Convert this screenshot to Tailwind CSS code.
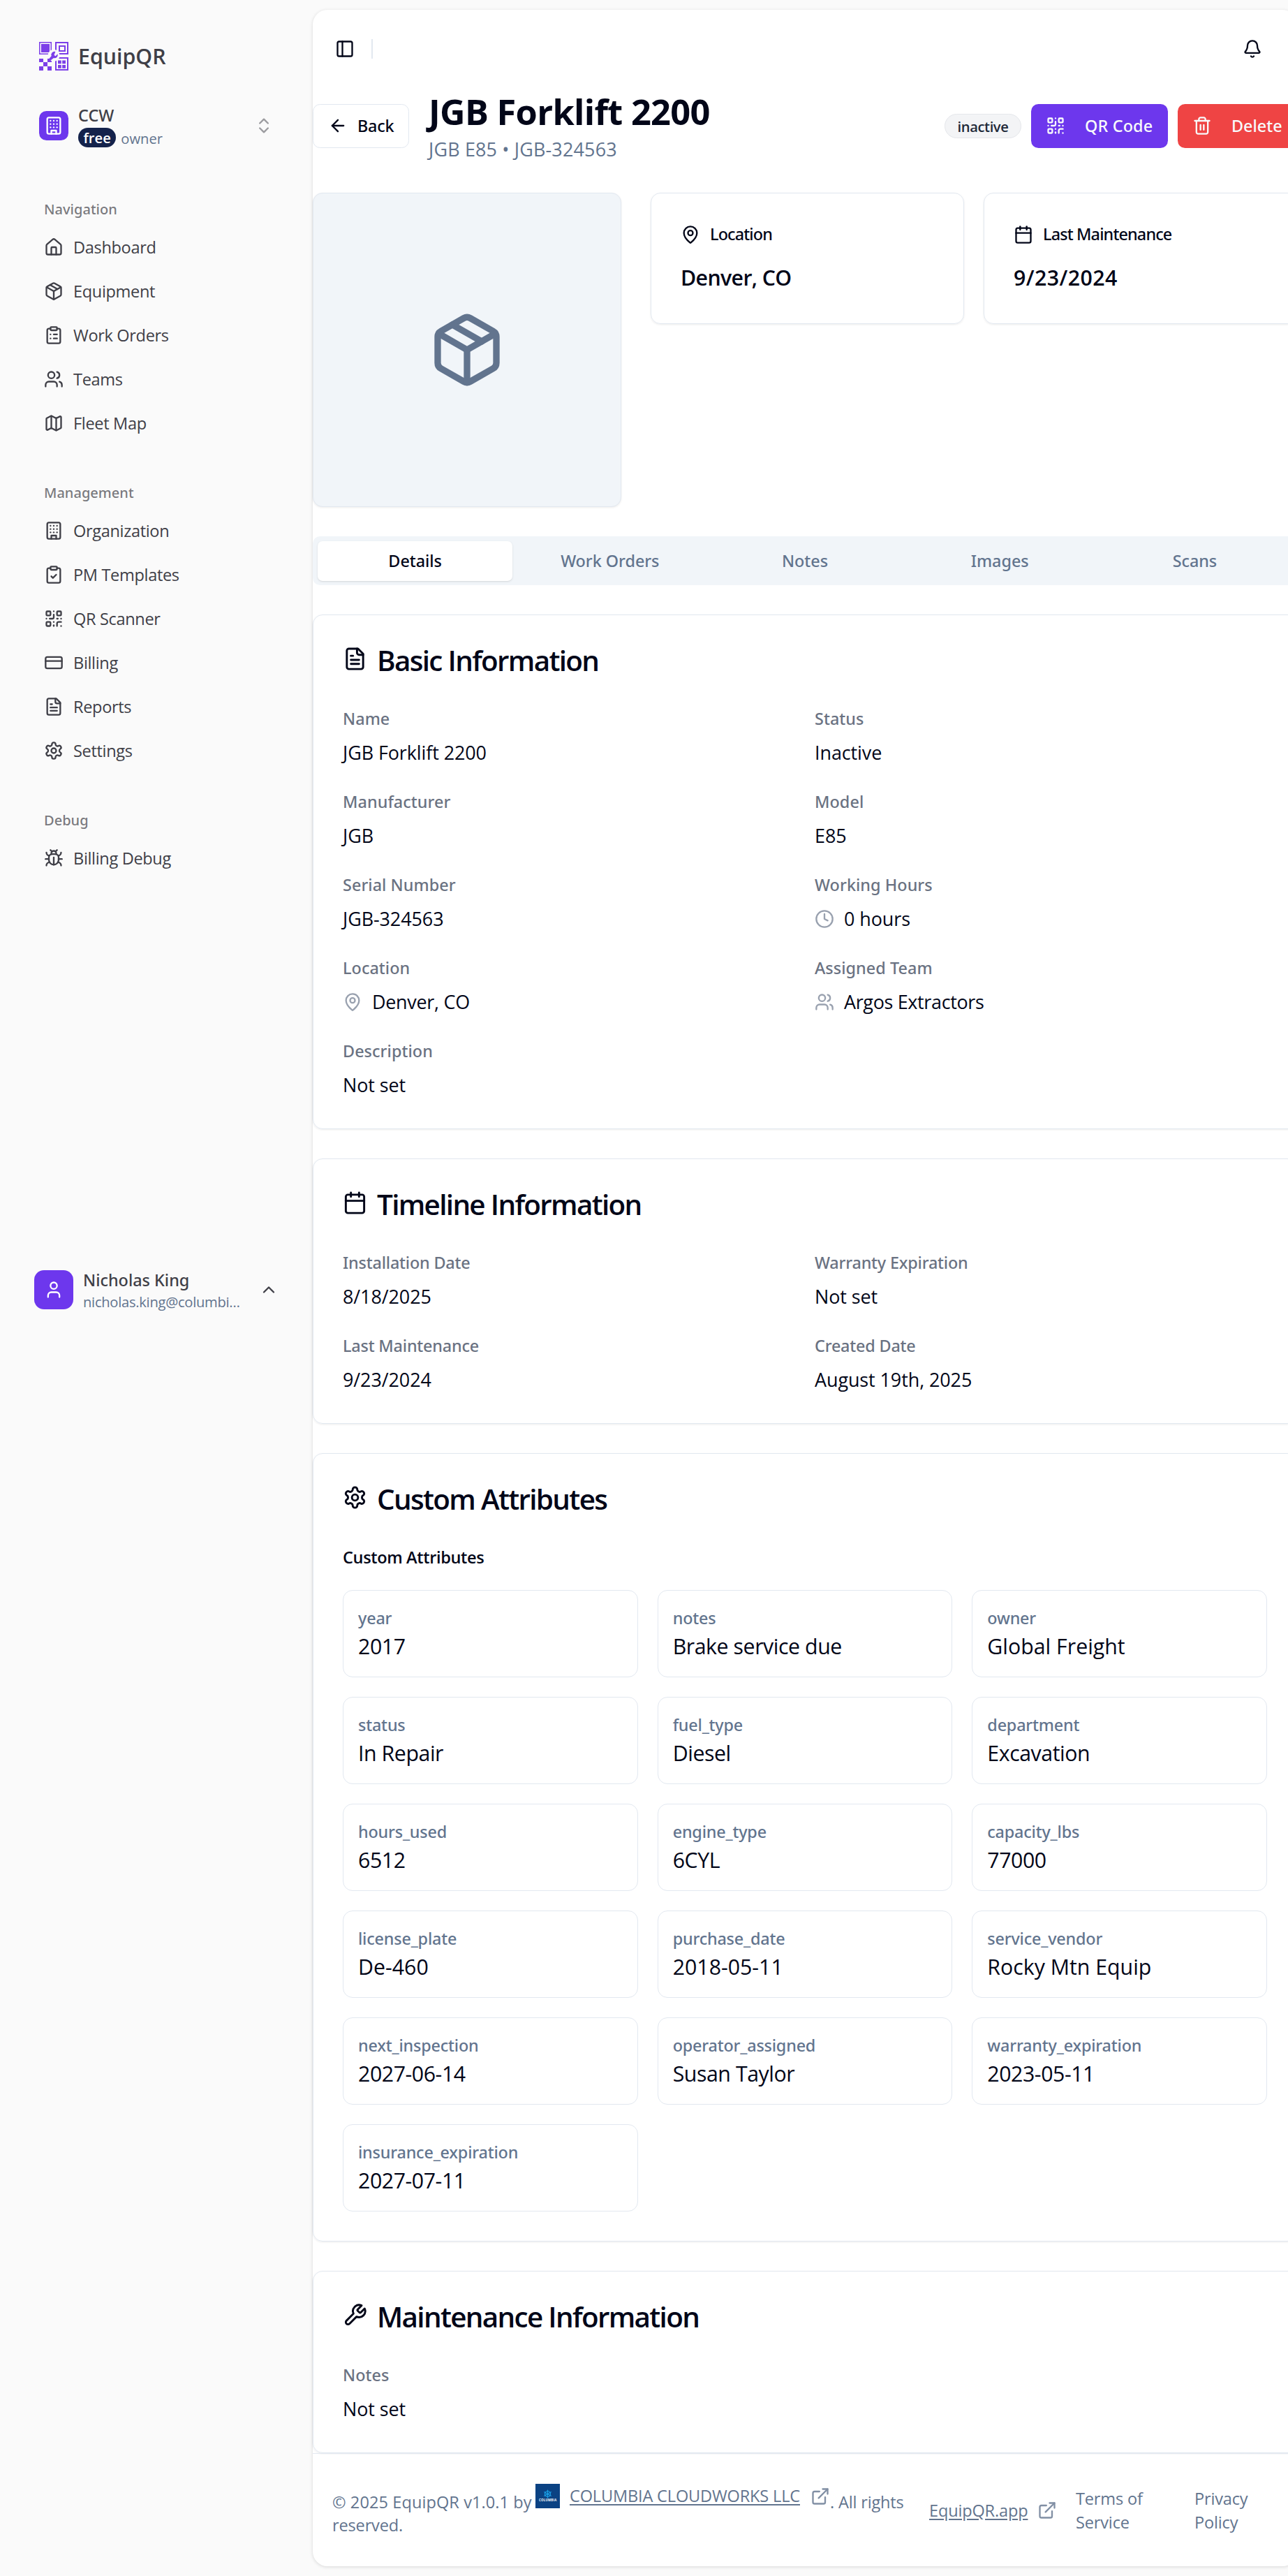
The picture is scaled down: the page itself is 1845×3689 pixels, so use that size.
<!DOCTYPE html>
<html lang="en" class="text-[28px]">
<head>
<meta charset="utf-8">
<title>EquipQR</title>
<script src="https://cdn.jsdelivr.net/npm/@tailwindcss/browser@4"></script>
</head>
<body class="flex h-[3689px] overflow-hidden bg-[#fafafa] fill-none stroke-2 font-['Segoe_UI','Open_Sans',sans-serif] leading-normal text-slate-950 [font-size-adjust:0.515]">

<!-- icon sprite -->
<svg class="absolute size-0" aria-hidden="true">
  <defs>
    <g id="i-panel"><rect width="18" height="18" x="3" y="3" rx="2"/><path d="M9 3v18"/></g>
    <g id="i-bell"><path d="M10.268 21a2 2 0 0 0 3.464 0"/><path d="M3.262 15.326A1 1 0 0 0 4 17h16a1 1 0 0 0 .74-1.673C19.41 13.956 18 12.499 18 8A6 6 0 0 0 6 8c0 4.499-1.411 5.956-2.738 7.326"/></g>
    <g id="i-back"><path d="m12 19-7-7 7-7"/><path d="M19 12H5"/></g>
    <g id="i-qr"><rect width="5" height="5" x="3" y="3" rx="1"/><rect width="5" height="5" x="16" y="3" rx="1"/><rect width="5" height="5" x="3" y="16" rx="1"/><path d="M21 16h-3a2 2 0 0 0-2 2v3"/><path d="M21 21v.01"/><path d="M12 7v3a2 2 0 0 1-2 2H7"/><path d="M3 12h.01"/><path d="M12 3h.01"/><path d="M12 16v.01"/><path d="M16 12h1"/><path d="M21 12v.01"/><path d="M12 21v-1"/></g>
    <g id="i-trash"><path d="M3 6h18"/><path d="M19 6v14c0 1-1 2-2 2H7c-1 0-2-1-2-2V6"/><path d="M8 6V4c0-1 1-2 2-2h4c1 0 2 1 2 2v2"/><path d="M10 11v6"/><path d="M14 11v6"/></g>
    <g id="i-package"><path d="M11 21.73a2 2 0 0 0 2 0l7-4A2 2 0 0 0 21 16V8a2 2 0 0 0-1-1.73l-7-4a2 2 0 0 0-2 0l-7 4A2 2 0 0 0 3 8v8a2 2 0 0 0 1 1.73z"/><path d="M12 22V12"/><path d="M3.29 7 12 12l8.71-5"/><path d="m7.5 4.27 9 5.15"/></g>
    <g id="i-pin"><path d="M20 10c0 4.993-5.539 10.193-7.399 11.799a1 1 0 0 1-1.202 0C9.539 20.193 4 14.993 4 10a8 8 0 0 1 16 0"/><circle cx="12" cy="10" r="3"/></g>
    <g id="i-calendar"><path d="M8 2v4"/><path d="M16 2v4"/><rect width="18" height="18" x="3" y="4" rx="2"/><path d="M3 10h18"/></g>
    <g id="i-file"><path d="M15 2H6a2 2 0 0 0-2 2v16a2 2 0 0 0 2 2h12a2 2 0 0 0 2-2V7Z"/><path d="M14 2v4a2 2 0 0 0 2 2h4"/><path d="M10 9H8"/><path d="M16 13H8"/><path d="M16 17H8"/></g>
    <g id="i-clock"><circle cx="12" cy="12" r="10"/><path d="M12 6v6l4 2"/></g>
    <g id="i-users"><path d="M16 21v-2a4 4 0 0 0-4-4H6a4 4 0 0 0-4 4v2"/><circle cx="9" cy="7" r="4"/><path d="M22 21v-2a4 4 0 0 0-3-3.87"/><path d="M16 3.13a4 4 0 0 1 0 7.75"/></g>
    <g id="i-user"><path d="M19 21v-2a4 4 0 0 0-4-4H9a4 4 0 0 0-4 4v2"/><circle cx="12" cy="7" r="4"/></g>
    <g id="i-settings"><path d="M12.22 2h-.44a2 2 0 0 0-2 2v.18a2 2 0 0 1-1 1.73l-.43.25a2 2 0 0 1-2 0l-.15-.08a2 2 0 0 0-2.73.73l-.22.38a2 2 0 0 0 .73 2.73l.15.1a2 2 0 0 1 1 1.72v.51a2 2 0 0 1-1 1.74l-.15.09a2 2 0 0 0-.73 2.73l.22.38a2 2 0 0 0 2.73.73l.15-.08a2 2 0 0 1 2 0l.43.25a2 2 0 0 1 1 1.73V20a2 2 0 0 0 2 2h.44a2 2 0 0 0 2-2v-.18a2 2 0 0 1 1-1.73l.43-.25a2 2 0 0 1 2 0l.15.08a2 2 0 0 0 2.73-.73l.22-.39a2 2 0 0 0-.73-2.73l-.15-.08a2 2 0 0 1-1-1.74v-.5a2 2 0 0 1 1-1.74l.15-.09a2 2 0 0 0 .73-2.73l-.22-.38a2 2 0 0 0-2.73-.73l-.15.08a2 2 0 0 1-2 0l-.43-.25a2 2 0 0 1-1-1.73V4a2 2 0 0 0-2-2z"/><circle cx="12" cy="12" r="3"/></g>
    <g id="i-wrench"><path d="M14.7 6.3a1 1 0 0 0 0 1.4l1.6 1.6a1 1 0 0 0 1.4 0l3.77-3.77a6 6 0 0 1-7.94 7.94l-6.91 6.91a2.12 2.12 0 0 1-3-3l6.91-6.91a6 6 0 0 1 7.94-7.94l-3.76 3.76z"/></g>
    <g id="i-external"><path d="M15 3h6v6"/><path d="M10 14 21 3"/><path d="M18 13v6a2 2 0 0 1-2 2H5a2 2 0 0 1-2-2V8a2 2 0 0 1 2-2h6"/></g>
    <g id="i-home"><path d="M15 21v-8a1 1 0 0 0-1-1h-4a1 1 0 0 0-1 1v8"/><path d="M3 10a2 2 0 0 1 .709-1.528l7-5.999a2 2 0 0 1 2.582 0l7 5.999A2 2 0 0 1 21 10v9a2 2 0 0 1-2 2H5a2 2 0 0 1-2-2z"/></g>
    <g id="i-list"><rect width="8" height="4" x="8" y="2" rx="1"/><path d="M16 4h2a2 2 0 0 1 2 2v14a2 2 0 0 1-2 2H6a2 2 0 0 1-2-2V6a2 2 0 0 1 2-2h2"/><path d="M12 11h4"/><path d="M12 16h4"/><path d="M8 11h.01"/><path d="M8 16h.01"/></g>
    <g id="i-check"><rect width="8" height="4" x="8" y="2" rx="1"/><path d="M16 4h2a2 2 0 0 1 2 2v14a2 2 0 0 1-2 2H6a2 2 0 0 1-2-2V6a2 2 0 0 1 2-2h2"/><path d="m9 14 2 2 4-4"/></g>
    <g id="i-map"><path d="M14.106 5.553a2 2 0 0 0 1.788 0l3.659-1.83A1 1 0 0 1 21 4.619v12.764a1 1 0 0 1-.553.894l-4.553 2.277a2 2 0 0 1-1.788 0l-4.212-2.106a2 2 0 0 0-1.788 0l-3.659 1.83A1 1 0 0 1 3 19.381V6.618a1 1 0 0 1 .553-.894l4.553-2.277a2 2 0 0 1 1.788 0z"/><path d="M15 5.764v15"/><path d="M9 3.236v15"/></g>
    <g id="i-building"><rect width="16" height="20" x="4" y="2" rx="2"/><path d="M9 22v-4h6v4"/><path d="M8 6h.01"/><path d="M16 6h.01"/><path d="M12 6h.01"/><path d="M12 10h.01"/><path d="M12 14h.01"/><path d="M16 10h.01"/><path d="M16 14h.01"/><path d="M8 10h.01"/><path d="M8 14h.01"/></g>
    <g id="i-card"><rect width="20" height="14" x="2" y="5" rx="2"/><path d="M2 10h20"/></g>
    <g id="i-bug"><path d="m8 2 1.88 1.88"/><path d="M14.12 3.88 16 2"/><path d="M9 7.13v-1a3.003 3.003 0 1 1 6 0v1"/><path d="M12 20c-3.3 0-6-2.7-6-6v-3a4 4 0 0 1 4-4h4a4 4 0 0 1 4 4v3c0 3.3-2.7 6-6 6"/><path d="M12 20v-9"/><path d="M6.53 9C4.6 8.8 3 7.1 3 5"/><path d="M6 13H2"/><path d="M3 21c0-2.1 1.7-3.9 3.8-4"/><path d="M20.97 5c0 2.1-1.6 3.8-3.5 4"/><path d="M22 13h-4"/><path d="M17.2 17c2.1.1 3.8 1.9 3.8 4"/></g>
    <g id="i-updown"><path d="m7 15 5 5 5-5"/><path d="m7 9 5-5 5 5"/></g>
    <g id="i-up"><path d="m18 15-6-6-6 6"/></g>
  </defs>
</svg>

<aside class="flex w-64 shrink-0 flex-col text-zinc-700 [stroke-linecap:round] [stroke-linejoin:round]">
  <div class="flex h-[150px] items-start gap-[14px] pl-8 pt-[59px]">
    <svg viewBox="0 0 42 42" class="size-6 shrink-0 stroke-none fill-[#7c3fe8]">
      <path fill-rule="evenodd" d="M0 1h18v18H0zM1.500 2.500v15h15v-15zM3 4h12v12H3z"/>
      <path fill-rule="evenodd" d="M23 1h19v18H23zM25 3v14h15V3zM28 6h10v9H28zM30 8v5h6V8z"/>
      <path fill-rule="evenodd" d="M23 23h19v19H23zM25 25v15h15V25zM27 27.500h4.800v4.800H27zM33.200 27.500H38v4.800h-4.800zM27 34h4.800v4.800H27zM33.200 34H38v4.800h-4.800z"/>
      <path d="M0 25h6v5H0zM12 25h6v5h-6zM6 30h6v6H6zM0 36h6v6H0zM12 36h6v6h-6z"/>
      <circle cx="21" cy="20.500" r="8.500" class="fill-[#fafafa]"/>
      <g transform="translate(11.500 14.500) scale(.7)" class="fill-[#7c3fe8]"><path d="M14.700 6.300a1 1 0 0 0 0 1.400l1.600 1.600a1 1 0 0 0 1.400 0l3.770-3.770a6.500 6.500 0 0 1-8 8.200l-8.500 6.600a2.120 2.120 0 0 1-3-3l7-8a6.500 6.500 0 0 1 8-8.700z"/></g>
    </svg>
    <span class="text-lg font-[570] leading-[44px]">EquipQR</span>
  </div>

  <div class="flex h-[60px] items-center gap-[14px] px-8">
    <span class="flex size-6 shrink-0 items-center justify-center rounded-md bg-[#6d37ed] text-white">
      <svg viewBox="0 0 24 24" class="size-4 stroke-current"><use href="#i-building"/></svg>
    </span>
    <div class="flex-1">
      <div class="font-['Noto_Sans'] text-sm font-medium leading-[33px]">CCW</div>
      <div class="flex items-center gap-[7px]">
        <span class="flex h-4 items-center rounded-full bg-[#14224b] px-[7.5px] pt-[1px] text-xs font-semibold text-white">free</span>
        <span class="pt-[2px] text-xs text-slate-500">owner</span>
      </div>
    </div>
    <svg viewBox="0 0 24 24" class="size-4 stroke-current opacity-50"><use href="#i-updown"/></svg>
  </div>

  <nav class="flex flex-col gap-[42px] pl-[63px] pt-[60px] text-sm tracking-[-0.014em]">
    <section>
      <h3 class="flex h-8 items-center pt-[3px] font-['Noto_Sans'] text-xs font-medium tracking-[0em] text-zinc-700/70">Navigation</h3>
      <ul class="flex flex-col gap-[7px]">
        <li class="flex h-8 items-center gap-[14px]"><svg viewBox="0 0 24 24" class="size-4 stroke-current"><use href="#i-home"/></svg>Dashboard</li>
        <li class="flex h-8 items-center gap-[14px]"><svg viewBox="0 0 24 24" class="size-4 stroke-current"><use href="#i-package"/></svg>Equipment</li>
        <li class="flex h-8 items-center gap-[14px]"><svg viewBox="0 0 24 24" class="size-4 stroke-current"><use href="#i-list"/></svg>Work Orders</li>
        <li class="flex h-8 items-center gap-[14px]"><svg viewBox="0 0 24 24" class="size-4 stroke-current"><use href="#i-users"/></svg>Teams</li>
        <li class="flex h-8 items-center gap-[14px]"><svg viewBox="0 0 24 24" class="size-4 stroke-current"><use href="#i-map"/></svg>Fleet Map</li>
      </ul>
    </section>
    <section>
      <h3 class="flex h-8 items-center pt-[3px] font-['Noto_Sans'] text-xs font-medium tracking-[0em] text-zinc-700/70">Management</h3>
      <ul class="flex flex-col gap-[7px]">
        <li class="flex h-8 items-center gap-[14px]"><svg viewBox="0 0 24 24" class="size-4 stroke-current"><use href="#i-building"/></svg>Organization</li>
        <li class="flex h-8 items-center gap-[14px]"><svg viewBox="0 0 24 24" class="size-4 stroke-current"><use href="#i-check"/></svg>PM Templates</li>
        <li class="flex h-8 items-center gap-[14px]"><svg viewBox="0 0 24 24" class="size-4 stroke-current"><use href="#i-qr"/></svg>QR Scanner</li>
        <li class="flex h-8 items-center gap-[14px]"><svg viewBox="0 0 24 24" class="size-4 stroke-current"><use href="#i-card"/></svg>Billing</li>
        <li class="flex h-8 items-center gap-[14px]"><svg viewBox="0 0 24 24" class="size-4 stroke-current"><use href="#i-file"/></svg>Reports</li>
        <li class="flex h-8 items-center gap-[14px]"><svg viewBox="0 0 24 24" class="size-4 stroke-current"><use href="#i-settings"/></svg>Settings</li>
      </ul>
    </section>
    <section>
      <h3 class="flex h-8 items-center pt-[3px] font-['Noto_Sans'] text-xs font-medium tracking-[0em] text-zinc-700/70">Debug</h3>
      <ul>
        <li class="flex h-8 items-center gap-[14px]"><svg viewBox="0 0 24 24" class="size-4 stroke-current"><use href="#i-bug"/></svg>Billing Debug</li>
      </ul>
    </section>
  </nav>

  <div class="mt-[562px] flex h-8 items-center px-[49px]">
    <span class="flex size-8 shrink-0 items-center justify-center rounded-lg bg-[#6d37ed] text-white">
      <svg viewBox="0 0 24 24" class="size-4 stroke-current"><use href="#i-user"/></svg>
    </span>
    <div class="ml-[14px] w-[232px] pt-[3px]">
      <div class="truncate font-['Noto_Sans'] text-sm font-medium leading-[31px]">Nicholas King</div>
      <div class="w-[231px] truncate text-xs leading-[30px] tracking-[-0.014em] text-slate-500">nicholas.king@columbiacloudworks.com</div>
    </div>
    <svg viewBox="0 0 24 24" class="ml-auto size-4 shrink-0 stroke-current"><use href="#i-up"/></svg>
  </div>
</aside>

<main class="my-2 flex h-[3661px] w-[1410px] shrink-0 flex-col rounded-xl bg-white shadow-[0_1px_5px_rgba(0,0,0,0.14)] [stroke-linecap:round] [stroke-linejoin:round]">
  <header class="flex h-16 shrink-0 items-center pl-[32px] pr-[50px]">
    <svg viewBox="0 0 24 24" class="size-4 stroke-current"><use href="#i-panel"/></svg>
    <div class="ml-[24px] h-4 w-[2px] bg-slate-200"></div>
    <svg viewBox="0 0 24 24" class="ml-auto size-4 stroke-current"><use href="#i-bell"/></svg>
  </header>

  <div class="flex h-[108px] shrink-0 items-center">
    <button class="flex h-9 w-[138px] items-center gap-[14px] rounded-md border border-slate-200 pl-[21px] font-['Noto_Sans'] text-sm font-medium tracking-[-0.01em]"><svg viewBox="0 0 24 24" class="size-4 shrink-0 stroke-current"><use href="#i-back"/></svg>Back</button>
    <div class="ml-4 pt-[3px]">
      <h1 class="text-3xl font-bold leading-[64px] tracking-[-0.0134em]">JGB Forklift 2200</h1>
      <p class="text-base leading-[43px] tracking-[0.006em] text-slate-500">JGB E85 • JGB-324563</p>
    </div>
    <div class="ml-auto flex items-center gap-[14px] whitespace-nowrap">
      <span class="flex h-[35px] w-[110px] items-center justify-center rounded-full border border-gray-200 bg-gray-100 pt-[2px] text-xs font-semibold tracking-[-0.02em] text-gray-800">inactive</span>
      <button class="flex h-9 w-[196px] items-center gap-4 rounded-md bg-[#6d37ed] pl-[21px] font-['Noto_Sans'] text-sm font-medium tracking-[0.006em] text-slate-50"><svg viewBox="0 0 24 24" class="size-4 shrink-0 stroke-current"><use href="#i-qr"/></svg>QR Code</button>
      <button class="flex h-9 w-[171px] items-center gap-4 rounded-md bg-[#ef4444] pl-[21px] font-['Noto_Sans'] text-sm font-medium tracking-[0em] text-slate-50"><svg viewBox="0 0 24 24" class="size-4 shrink-0 stroke-current"><use href="#i-trash"/></svg>Delete</button>
    </div>
  </div>

  <div class="mt-[42px] grid shrink-0 grid-cols-3 items-start gap-[42px]">
    <div class="flex h-[450px] items-center justify-center rounded-lg border border-slate-200 bg-slate-100 text-slate-500 shadow-[0_1px_3px_rgba(0,0,0,0.08)]"><svg viewBox="0 0 24 24" class="size-16 stroke-current"><use href="#i-package"/></svg></div>
    <div class="col-span-2 grid grid-cols-2 gap-4">
      <div class="h-[188px] rounded-lg border border-slate-200 p-[42px] shadow-[0_1px_3px_rgba(0,0,0,0.08)]">
        <div class="flex h-[33px] items-center gap-[14px] font-['Noto_Sans'] text-sm font-medium tracking-[-0.035em]"><svg viewBox="0 0 24 24" class="size-4 stroke-current"><use href="#i-pin"/></svg>Location</div>
        <div class="mt-[21px] text-lg font-semibold leading-[49px] tracking-[-0.02em]">Denver, CO</div>
      </div>
      <div class="h-[188px] rounded-lg border border-slate-200 p-[42px] shadow-[0_1px_3px_rgba(0,0,0,0.08)]">
        <div class="flex h-[33px] items-center gap-[14px] font-['Noto_Sans'] text-sm font-medium tracking-[-0.035em]"><svg viewBox="0 0 24 24" class="size-4 stroke-current"><use href="#i-calendar"/></svg>Last Maintenance</div>
        <div class="mt-[21px] text-lg font-semibold leading-[49px] tracking-[0.014em]">9/23/2024</div>
      </div>
    </div>
  </div>

  <div class="mt-[42px] grid h-[70px] shrink-0 grid-cols-5 rounded-md bg-slate-100 p-[7px] text-center font-['Noto_Sans'] text-sm font-medium leading-[57px] tracking-[-0.002em] text-slate-500">
    <div class="rounded-sm bg-white text-slate-950 shadow-sm">Details</div>
    <div>Work Orders</div>
    <div>Notes</div>
    <div>Images</div>
    <div>Scans</div>
  </div>

  <section class="mt-[42px] rounded-lg border border-slate-200 px-[42px] pb-[41px] pt-[42px] shadow-[0_1px_3px_rgba(0,0,0,0.08)]">
    <h2 class="flex h-[42px] items-center gap-[14px] pt-[3px] text-2xl font-[570] leading-none tracking-[-0.04em]"><svg viewBox="0 0 24 24" class="mb-[4px] size-5 stroke-current"><use href="#i-file"/></svg>Basic Information</h2>
    <dl class="mt-[43px] grid grid-cols-2 gap-4 leading-[42px] tracking-[-0.003em]">
      <div><dt class="font-['Noto_Sans'] text-sm font-medium leading-[42px] tracking-[0.002em] text-gray-500">Name</dt><dd class="mt-[7px]">JGB Forklift 2200</dd></div>
      <div><dt class="font-['Noto_Sans'] text-sm font-medium leading-[42px] tracking-[0.002em] text-gray-500">Status</dt><dd class="mt-[7px]">Inactive</dd></div>
      <div><dt class="font-['Noto_Sans'] text-sm font-medium leading-[42px] tracking-[0.002em] text-gray-500">Manufacturer</dt><dd class="mt-[7px]">JGB</dd></div>
      <div><dt class="font-['Noto_Sans'] text-sm font-medium leading-[42px] tracking-[0.002em] text-gray-500">Model</dt><dd class="mt-[7px]">E85</dd></div>
      <div><dt class="font-['Noto_Sans'] text-sm font-medium leading-[42px] tracking-[0.002em] text-gray-500">Serial Number</dt><dd class="mt-[7px]">JGB-324563</dd></div>
      <div><dt class="font-['Noto_Sans'] text-sm font-medium leading-[42px] tracking-[0.002em] text-gray-500">Working Hours</dt><dd class="mt-[7px] flex items-center gap-[14px]"><svg viewBox="0 0 24 24" class="size-4 stroke-gray-400"><use href="#i-clock"/></svg>0 hours</dd></div>
      <div><dt class="font-['Noto_Sans'] text-sm font-medium leading-[42px] tracking-[0.002em] text-gray-500">Location</dt><dd class="mt-[7px] flex items-center gap-[14px] tracking-[-0.01em]"><svg viewBox="0 0 24 24" class="size-4 stroke-gray-400"><use href="#i-pin"/></svg>Denver, CO</dd></div>
      <div><dt class="font-['Noto_Sans'] text-sm font-medium leading-[42px] tracking-[0.002em] text-gray-500">Assigned Team</dt><dd class="mt-[7px] flex items-center gap-[14px] tracking-[-0.012em]"><svg viewBox="0 0 24 24" class="size-4 stroke-gray-400"><use href="#i-users"/></svg>Argos Extractors</dd></div>
      <div class="col-span-2"><dt class="font-['Noto_Sans'] text-sm font-medium leading-[42px] tracking-[0.002em] text-gray-500">Description</dt><dd class="mt-[7px]">Not set</dd></div>
    </dl>
  </section>

  <section class="mt-[42px] rounded-lg border border-slate-200 px-[42px] pb-[41px] pt-[42px] shadow-[0_1px_3px_rgba(0,0,0,0.08)]">
    <h2 class="flex h-[42px] items-center gap-[14px] pt-[3px] text-2xl font-[570] leading-none tracking-[-0.04em]"><svg viewBox="0 0 24 24" class="mb-[4px] size-5 stroke-current"><use href="#i-calendar"/></svg>Timeline Information</h2>
    <dl class="mt-[43px] grid grid-cols-2 gap-4 leading-[42px] tracking-[-0.003em]">
      <div><dt class="font-['Noto_Sans'] text-sm font-medium leading-[42px] tracking-[-0.008em] text-gray-500">Installation Date</dt><dd class="mt-[7px]">8/18/2025</dd></div>
      <div><dt class="font-['Noto_Sans'] text-sm font-medium leading-[42px] tracking-[-0.008em] text-gray-500">Warranty Expiration</dt><dd class="mt-[7px]">Not set</dd></div>
      <div><dt class="font-['Noto_Sans'] text-sm font-medium leading-[42px] tracking-[-0.008em] text-gray-500">Last Maintenance</dt><dd class="mt-[7px]">9/23/2024</dd></div>
      <div><dt class="font-['Noto_Sans'] text-sm font-medium leading-[42px] tracking-[-0.008em] text-gray-500">Created Date</dt><dd class="mt-[7px]">August 19th, 2025</dd></div>
    </dl>
  </section>

  <section class="mt-[42px] rounded-lg border border-slate-200 p-[42px] shadow-[0_1px_3px_rgba(0,0,0,0.08)]">
    <h2 class="flex h-[42px] items-center gap-[14px] pt-[3px] text-2xl font-[570] leading-none tracking-[-0.04em]"><svg viewBox="0 0 24 24" class="mb-[4px] size-5 stroke-current"><use href="#i-settings"/></svg>Custom Attributes</h2>
    <h3 class="mt-[43px] text-sm font-semibold leading-[42px] tracking-[-0.015em]">Custom Attributes</h3>
    <dl class="mt-[26px] grid auto-rows-[125px] grid-cols-3 gap-4 text-lg leading-[45px] tracking-[-0.014em]">
      <div class="rounded-lg border border-slate-200 px-[21px] pt-[22px]"><dt class="font-['Noto_Sans'] text-sm font-medium leading-[35px] tracking-[-0.008em] text-slate-500">year</dt><dd>2017</dd></div>
      <div class="rounded-lg border border-slate-200 px-[21px] pt-[22px]"><dt class="font-['Noto_Sans'] text-sm font-medium leading-[35px] tracking-[-0.008em] text-slate-500">notes</dt><dd>Brake service due</dd></div>
      <div class="rounded-lg border border-slate-200 px-[21px] pt-[22px]"><dt class="font-['Noto_Sans'] text-sm font-medium leading-[35px] tracking-[-0.008em] text-slate-500">owner</dt><dd class="tracking-[0em]">Global Freight</dd></div>
      <div class="rounded-lg border border-slate-200 px-[21px] pt-[22px]"><dt class="font-['Noto_Sans'] text-sm font-medium leading-[35px] tracking-[-0.008em] text-slate-500">status</dt><dd>In Repair</dd></div>
      <div class="rounded-lg border border-slate-200 px-[21px] pt-[22px]"><dt class="font-['Noto_Sans'] text-sm font-medium leading-[35px] tracking-[-0.008em] text-slate-500">fuel_type</dt><dd>Diesel</dd></div>
      <div class="rounded-lg border border-slate-200 px-[21px] pt-[22px]"><dt class="font-['Noto_Sans'] text-sm font-medium leading-[35px] tracking-[-0.008em] text-slate-500">department</dt><dd>Excavation</dd></div>
      <div class="rounded-lg border border-slate-200 px-[21px] pt-[22px]"><dt class="font-['Noto_Sans'] text-sm font-medium leading-[35px] tracking-[-0.008em] text-slate-500">hours_used</dt><dd>6512</dd></div>
      <div class="rounded-lg border border-slate-200 px-[21px] pt-[22px]"><dt class="font-['Noto_Sans'] text-sm font-medium leading-[35px] tracking-[-0.008em] text-slate-500">engine_type</dt><dd>6CYL</dd></div>
      <div class="rounded-lg border border-slate-200 px-[21px] pt-[22px]"><dt class="font-['Noto_Sans'] text-sm font-medium leading-[35px] tracking-[-0.008em] text-slate-500">capacity_lbs</dt><dd>77000</dd></div>
      <div class="rounded-lg border border-slate-200 px-[21px] pt-[22px]"><dt class="font-['Noto_Sans'] text-sm font-medium leading-[35px] tracking-[-0.008em] text-slate-500">license_plate</dt><dd class="tracking-[0em]">De-460</dd></div>
      <div class="rounded-lg border border-slate-200 px-[21px] pt-[22px]"><dt class="font-['Noto_Sans'] text-sm font-medium leading-[35px] tracking-[-0.008em] text-slate-500">purchase_date</dt><dd class="tracking-[0em]">2018-05-11</dd></div>
      <div class="rounded-lg border border-slate-200 px-[21px] pt-[22px]"><dt class="font-['Noto_Sans'] text-sm font-medium leading-[35px] tracking-[-0.008em] text-slate-500">service_vendor</dt><dd class="tracking-[0em]">Rocky Mtn Equip</dd></div>
      <div class="rounded-lg border border-slate-200 px-[21px] pt-[22px]"><dt class="font-['Noto_Sans'] text-sm font-medium leading-[35px] tracking-[-0.008em] text-slate-500">next_inspection</dt><dd>2027-06-14</dd></div>
      <div class="rounded-lg border border-slate-200 px-[21px] pt-[22px]"><dt class="font-['Noto_Sans'] text-sm font-medium leading-[35px] tracking-[-0.008em] text-slate-500">operator_assigned</dt><dd>Susan Taylor</dd></div>
      <div class="rounded-lg border border-slate-200 px-[21px] pt-[22px]"><dt class="font-['Noto_Sans'] text-sm font-medium leading-[35px] tracking-[-0.008em] text-slate-500">warranty_expiration</dt><dd>2023-05-11</dd></div>
      <div class="rounded-lg border border-slate-200 px-[21px] pt-[22px]"><dt class="font-['Noto_Sans'] text-sm font-medium leading-[35px] tracking-[-0.008em] text-slate-500">insurance_expiration</dt><dd>2027-07-11</dd></div>
    </dl>
  </section>

  <section class="mt-[42px] rounded-lg border border-slate-200 px-[42px] pb-[41px] pt-[42px] shadow-[0_1px_3px_rgba(0,0,0,0.08)]">
    <h2 class="flex h-[42px] items-center gap-[14px] pt-[3px] text-2xl font-[570] leading-none tracking-[-0.04em]"><svg viewBox="0 0 24 24" class="mb-[4px] size-5 stroke-current"><use href="#i-wrench"/></svg>Maintenance Information</h2>
    <dl class="mt-[43px] leading-[42px] tracking-[-0.003em]">
      <dt class="font-['Noto_Sans'] text-sm font-medium leading-[42px] tracking-[0.002em] text-gray-500">Notes</dt><dd class="mt-[7px]">Not set</dd>
    </dl>
  </section>

  <footer class="flex h-[162px] shrink-0 items-center border-t border-slate-200 px-4 text-sm leading-[34px] tracking-[-0.007em] text-slate-500">
    <div class="w-[855px] shrink-0">
      <div class="flex items-start whitespace-pre">
        <span class="w-[291px] pt-[9px] tracking-[0.003em]">© 2025 EquipQR v1.0.1 by</span>
        <svg viewBox="0 0 35 35" class="size-5 shrink-0 stroke-none">
          <rect width="35" height="35" class="fill-[#0b4283]"/>
          <g class="fill-none stroke-[#1aa0e8] stroke-[1.2]"><path d="M17.500 9v11M12.700 11.700l9.600 5.600M22.300 11.700l-9.600 5.600"/><circle cx="17.500" cy="14.500" r="4"/></g>
          <text x="17.500" y="24.500" text-anchor="middle" textLength="25" class="fill-white text-[4.500px] font-bold">COLUMBIA</text>
        </svg>
        <a class="ml-[14px] w-[330px] underline underline-offset-[3px]">COLUMBIA CLOUDWORKS LLC</a>
        <svg viewBox="0 0 24 24" class="ml-[15px] mt-[4px] size-4 shrink-0 stroke-current opacity-80"><use href="#i-external"/></svg>
        <span class="pt-[9px]">. All rights</span>
      </div>
      <div class="-mt-[1px]">reserved.</div>
    </div>
    <a class="w-[141px] underline underline-offset-[3px]">EquipQR.app</a>
    <svg viewBox="0 0 24 24" class="ml-[14px] size-4 shrink-0 stroke-current opacity-80"><use href="#i-external"/></svg>
    <a class="ml-[27px] w-[142px]">Terms of<br>Service</a>
    <a class="ml-[28px] w-[90px]">Privacy Policy</a>
  </footer>
</main>
</body>
</html>
